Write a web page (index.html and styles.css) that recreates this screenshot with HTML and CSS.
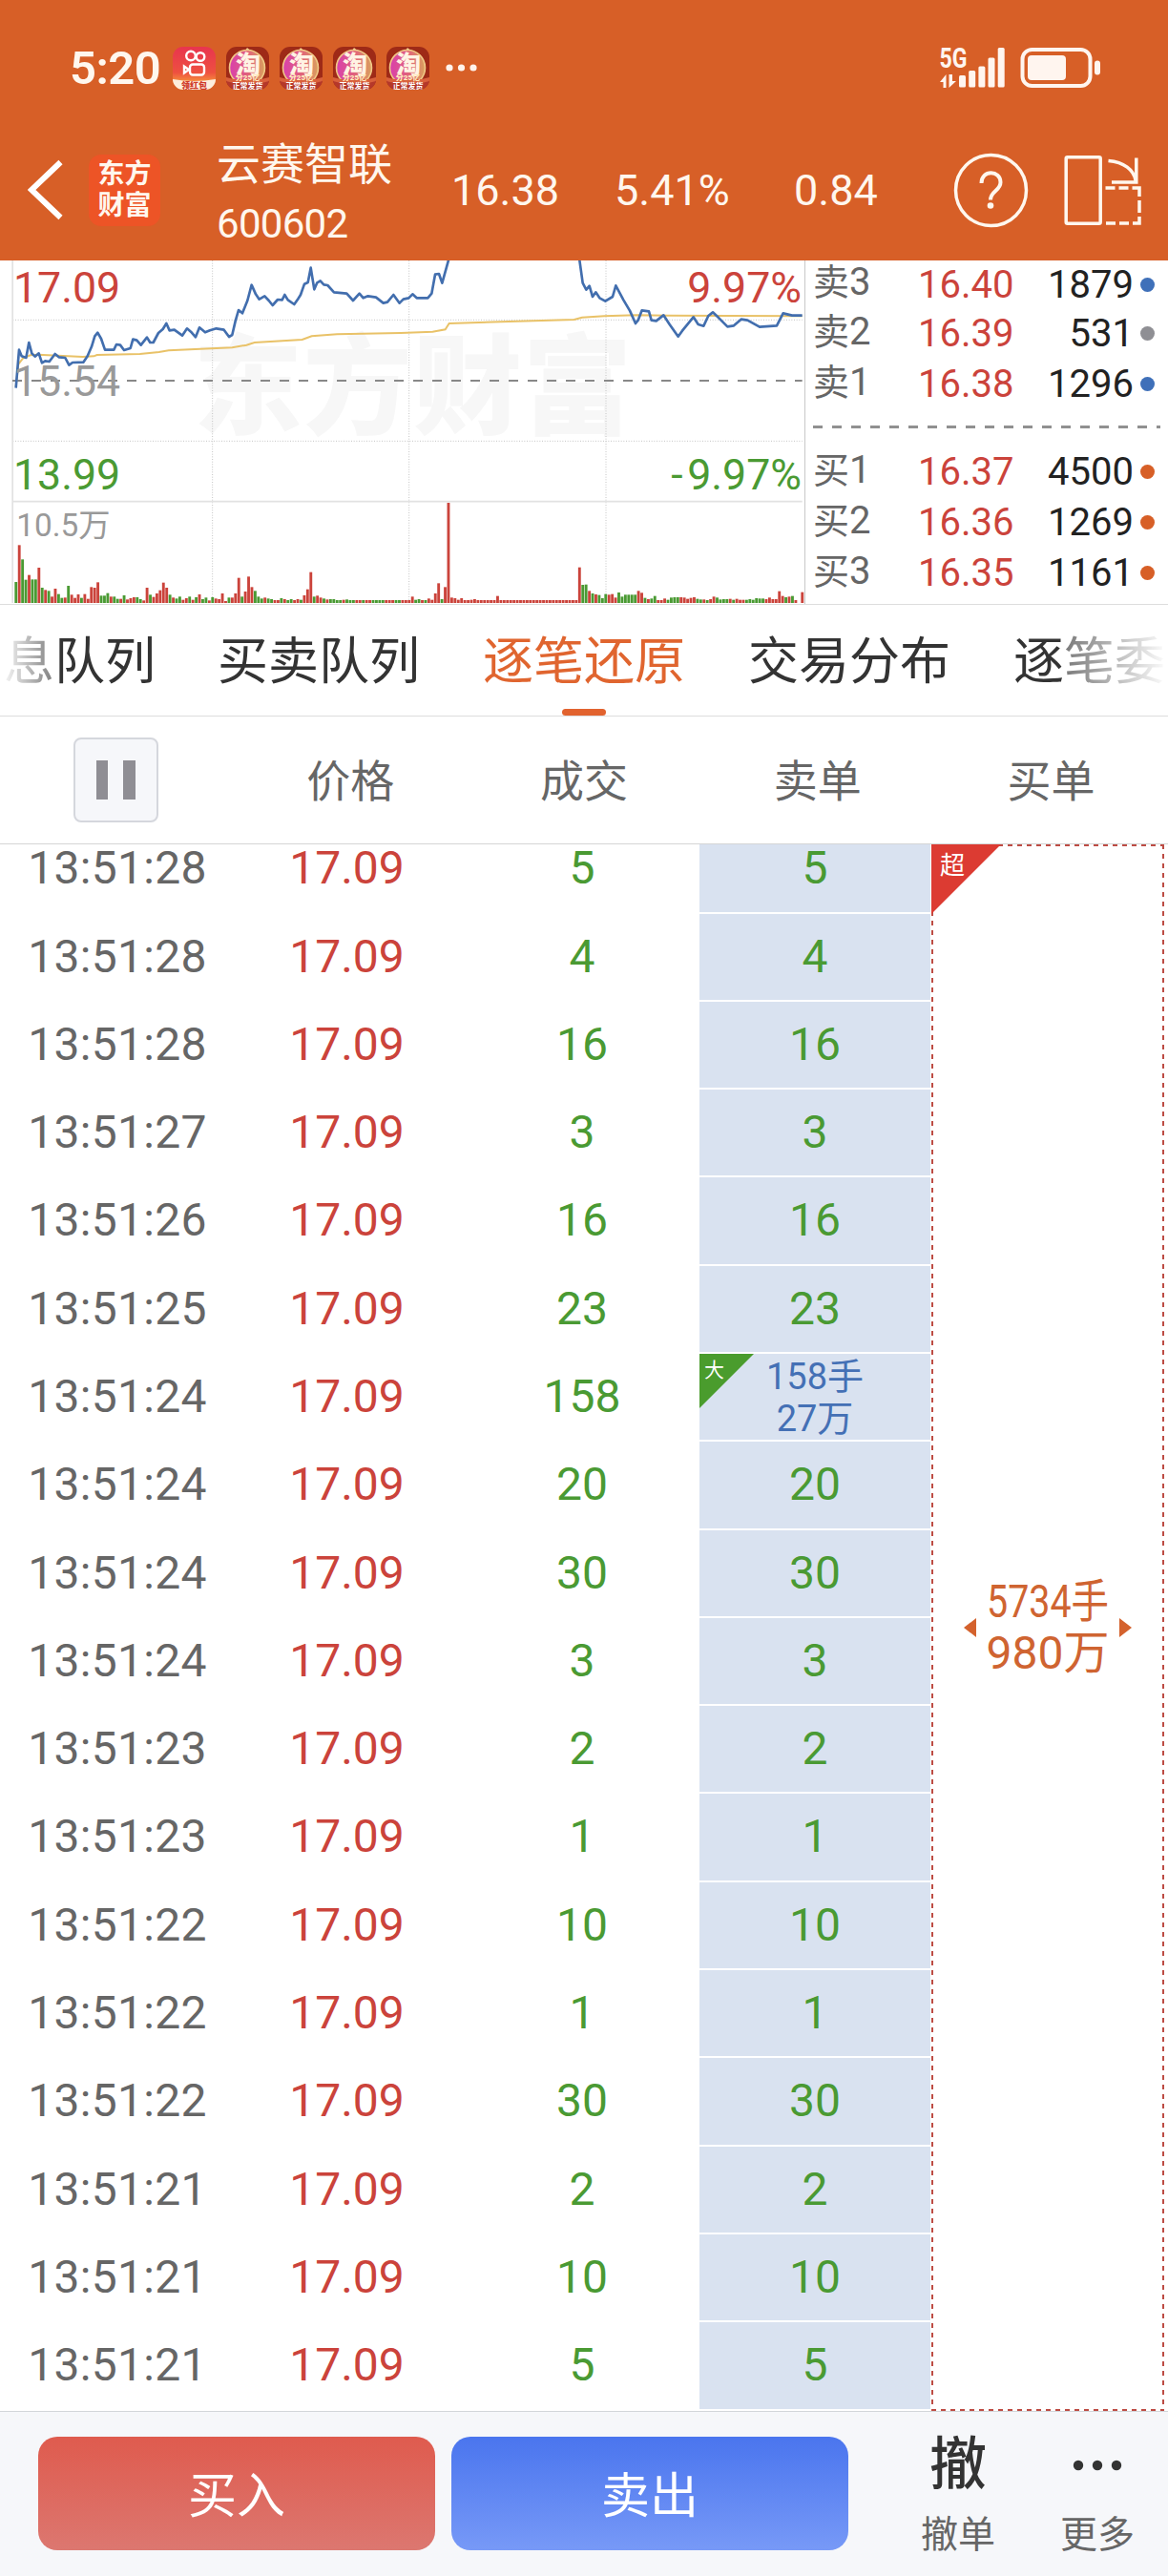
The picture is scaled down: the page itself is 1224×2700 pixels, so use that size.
FILE: index.html
```html
<!DOCTYPE html>
<html lang="zh-CN">
<head>
  <meta charset="UTF-8" />
  <title>云赛智联 600602</title>
  <meta name="viewport" content="width=device-width, initial-scale=1.0" />
  <link rel="stylesheet" href="styles.css">
</head>
<body>

  <svg width="0" height="0" class="defs">
    <defs>
      <linearGradient id="ksBg" x1="0" y1="0" x2="0" y2="1">
        <stop offset="0" stop-color="#e8344f" />
        <stop offset="0.6" stop-color="#ee5040" />
        <stop offset="0.8" stop-color="#f58a3c" />
      </linearGradient>
      <linearGradient id="tbBall" x1="0" y1="0" x2="1" y2="0">
        <stop offset="0" stop-color="#d93fae" />
        <stop offset="0.5" stop-color="#e0607c" />
        <stop offset="1" stop-color="#d9a05c" />
      </linearGradient>
      <clipPath id="appClip"><rect width="45" height="45" rx="11" /></clipPath>
      <symbol id="taobao" viewBox="0 0 45 45">
        <g clip-path="url(#appClip)">
          <rect width="45" height="45" fill="#9e2a17" />
          <path d="M18 7 L22 1 L28 6 Z" fill="#f3cf8c" />
          <circle cx="22" cy="22" r="18.5" fill="url(#tbBall)" stroke="#f0c987" stroke-width="1.6" />
          <rect y="36" width="45" height="9" fill="#b5382a" />
          <path d="M0 32 L8 34 H37 L45 32 V36 L37 38 H8 L0 36 Z" fill="#d9603c" />
          <text x="23" y="28" font-size="26" font-weight="900" text-anchor="middle" fill="#fff3e4">淘</text>
          <text x="22.500" y="35" font-size="8" font-weight="900" text-anchor="middle" fill="#ffe9bd">分25亿</text>
          <text x="22.500" y="43.500" font-size="8" font-weight="700" text-anchor="middle" fill="#fff">正常发货</text>
        </g>
      </symbol>
    </defs>
  </svg>

  <header class="top">
    <div class="status">
      <span class="clock">5:20</span>
      <div class="apps">
        <svg width="45" height="45" viewBox="0 0 45 45">
          <g clip-path="url(#appClip)">
            <rect width="45" height="45" fill="url(#ksBg)" />
            <path d="M0 34 Q22 38 45 34 V45 H0 Z" fill="#fdeedd" />
            <g fill="none" stroke="#fff" stroke-width="2.400">
              <circle cx="19" cy="9.500" r="4.800" />
              <circle cx="29" cy="10.500" r="4.300" />
              <rect x="18" y="18.500" width="15" height="11" rx="3" />
              <path d="M17 24 L12 20.500 V27.500 Z" />
            </g>
            <text x="22.500" y="43.500" font-size="9" font-weight="900" text-anchor="middle" fill="#cf3a2a">领红包</text>
          </g>
        </svg>
        <svg width="45" height="45"><use href="#taobao" /></svg>
        <svg width="45" height="45"><use href="#taobao" /></svg>
        <svg width="45" height="45"><use href="#taobao" /></svg>
        <svg width="45" height="45"><use href="#taobao" /></svg>
      </div>
      <svg class="more-apps" width="34" height="8" viewBox="0 0 34 8" fill="#fff3ec">
        <circle cx="4" cy="4" r="3.600" /><circle cx="16.500" cy="4" r="3.600" /><circle cx="29" cy="4" r="3.600" />
      </svg>
      <svg class="signal" width="172" height="64" viewBox="982 39 172 64" fill="#fff5ef">
        <text x="984.500" y="71" font-size="29" font-weight="700" textLength="29" lengthAdjust="spacingAndGlyphs">5G</text>
        <path d="M991.500 78 V92 H988.500 V86 H985 Z M994.500 78 V92 L1002 85 H998 V78 Z" />
        <rect x="1005" y="79" width="7" height="12.500" rx="1.500" />
        <rect x="1015.200" y="74" width="7" height="17.500" rx="1.500" />
        <rect x="1025.400" y="69.500" width="7" height="22" rx="1.500" />
        <rect x="1035.500" y="60.500" width="7" height="31" rx="1.500" />
        <rect x="1045.700" y="50" width="7" height="41.500" rx="1.500" />
        <rect x="1071.500" y="52" width="71" height="38" rx="10" fill="none" stroke="#fff5ef" stroke-width="4" />
        <rect x="1077" y="58" width="40" height="26" rx="4" />
        <rect x="1147" y="63.500" width="6" height="15" rx="3" />
      </svg>
    </div>

    <div class="titlebar">
      <svg class="back" width="38" height="64" viewBox="0 0 38 64">
        <path d="M34.500 3 L4 32 L34.500 61" fill="none" stroke="#fff" stroke-width="6" />
      </svg>
      <div class="logo"><span>东方</span><span>财富</span></div>
      <div class="stock">
        <div class="name">云赛智联</div>
        <div class="code">600602</div>
      </div>
      <span class="quote q-price">16.38</span>
      <span class="quote q-pct">5.41%</span>
      <span class="quote q-diff">0.84</span>
      <svg class="tools" width="200" height="80" viewBox="998 158 200 80" fill="none" stroke="#fff7ee" stroke-width="3.500">
        <circle cx="1038.500" cy="198.500" r="37" />
        <path d="M1028.500 191 C1028.500 176.500 1048.500 177 1048.500 190 C1048.500 199 1038 199 1038 208.500" stroke-width="4" />
        <circle cx="1038" cy="214.500" r="3.300" fill="#fff7ee" stroke="none" />
        <rect x="1117.200" y="163.700" width="36" height="69.500" rx="1.500" />
        <path d="M1161.500 167.500 C1178 169 1188 177 1190 188 M1190.800 164.500 V190 H1165" />
        <path d="M1158.500 196 h10 m4 0 h10 m4 0 h7.500 v9 m0 4 v13 m0 4 v7 h-7 m-4 0 h-10 m-4 0 h-10" />
      </svg>
    </div>
  </header>

  <section class="market">
    <svg class="chart" width="843" height="361" viewBox="0 24 2529 1083">
      <text class="watermark" x="608" y="543" textLength="1378">东方财富</text>
      <g class="grid">
        <path class="dots" d="M668 24 V1101 M1286 24 V1101 M1905 24 V1101 M40 211 H2522 M40 592 H2522" />
        <path class="solid" d="M39.500 24 V1101 M40 782 H2522" />
        <path class="mid" d="M39 402 H2522" />
      </g>
      <g id="bars"></g>
      <path class="avg" d="M50 420 L58 350 L72 332 L95 322 L120 320 L260 327 L295 325 L305 321 L440 318 L500 312 L530 307 L730 298 L775 290 L800 282 L950 273 L980 262 L1060 256 L1260 252 L1360 248 L1400 241 L1412 222 L1600 216 L1805 210 L1830 203 L1900 199 L2000 196 L2100 197 L2522 199" />
      <path class="price-line" d="M50 425 L60 305 L68 325 L82 330 L91 282 L100 316 L110 326 L122 316 L132 346 L142 340 L155 342 L173 318 L185 328 L205 330 L217 353 L228 345 L262 344 L275 325 L288 295 L298 262 L307 251 L318 270 L330 305 L358 305 L366 288 L378 290 L390 306 L410 300 L418 272 L430 275 L443 290 L462 266 L472 282 L482 282 L498 252 L512 240 L523 222 L533 244 L548 242 L573 260 L588 238 L600 248 L615 265 L627 235 L645 250 L660 244 L680 238 L704 242 L720 264 L730 258 L740 215 L750 180 L762 190 L778 150 L791 101 L804 130 L815 146 L832 136 L845 150 L857 165 L873 147 L887 148 L895 132 L905 148 L925 162 L935 148 L945 132 L957 98 L968 93 L977 47 L988 115 L997 94 L1007 88 L1018 100 L1030 102 L1050 124 L1090 128 L1110 150 L1130 128 L1142 142 L1157 136 L1182 140 L1205 158 L1218 155 L1237 132 L1256 158 L1268 146 L1285 142 L1297 130 L1310 142 L1345 142 L1357 128 L1368 68 L1380 66 L1390 95 L1412 16 M1821 16 L1832 95 L1843 116 L1853 104 L1863 138 L1873 124 L1885 142 L1903 152 L1926 138 L1936 103 L1960 148 L1980 182 L1998 222 L2006 212 L2018 181 L2040 184 L2048 212 L2063 214 L2086 196 L2105 225 L2132 263 L2145 245 L2180 202 L2195 225 L2212 230 L2227 198 L2241 187 L2260 205 L2287 232 L2307 229 L2330 209 L2350 212 L2388 233 L2442 229 L2462 190 L2490 197 L2522 197" />
      <g class="scale">
        <text class="up" x="42" y="155">17.09</text>
        <text class="flat" x="42" y="451">15.54</text>
        <text class="down" x="42" y="745">13.99</text>
        <text class="up" x="2520" y="155" text-anchor="end">9.97%</text>
        <text class="down" x="2520" y="745" text-anchor="end">-<tspan dx="14">9.97%</tspan></text>
        <text class="vol" x="52" y="890">10.5万</text>
      </g>
    </svg>

    <div class="book">
      <div class="book-row"><span class="lv">卖<b>3</b></span><span class="px">16.40</span><span class="qty">1879</span><i class="dot blue"></i></div>
      <div class="book-row"><span class="lv">卖<b>2</b></span><span class="px">16.39</span><span class="qty">531</span><i class="dot gray"></i></div>
      <div class="book-row"><span class="lv">卖<b>1</b></span><span class="px">16.38</span><span class="qty">1296</span><i class="dot blue"></i></div>
      <div class="book-sep"></div>
      <div class="book-row"><span class="lv">买<b>1</b></span><span class="px">16.37</span><span class="qty">4500</span><i class="dot orange"></i></div>
      <div class="book-row"><span class="lv">买<b>2</b></span><span class="px">16.36</span><span class="qty">1269</span><i class="dot orange"></i></div>
      <div class="book-row"><span class="lv">买<b>3</b></span><span class="px">16.35</span><span class="qty">1161</span><i class="dot orange"></i></div>
    </div>
  </section>

  <nav class="tabs">
    <span class="tab">息队列</span>
    <span class="tab">买卖队列</span>
    <span class="tab active">逐笔还原</span>
    <span class="tab">交易分布</span>
    <span class="tab">逐笔委</span>
  </nav>

  <div class="thead">
    <div class="th"><button class="pause"><i></i><i></i></button></div>
    <div class="th">价格</div>
    <div class="th">成交</div>
    <div class="th">卖单</div>
    <div class="th">买单</div>
  </div>

  <main class="ticks">
    <div class="rows" id="rows"></div>
    <div class="buy-order">
      <div class="corner super"><span>超</span></div>
      <i class="arrow left"></i>
      <div class="buy-total">
        <span class="hands">5734手</span>
        <span>980万</span>
      </div>
      <i class="arrow right"></i>
    </div>
  </main>

  <footer class="bottom">
    <button class="btn buy">买入</button>
    <button class="btn sell">卖出</button>
    <div class="action cancel">
      <span class="glyph">撤</span>
      <span class="label">撤单</span>
    </div>
    <div class="action">
      <span class="glyph">
        <svg width="52" height="12" viewBox="0 0 52 12" fill="#333">
          <circle cx="6" cy="6" r="5.200" /><circle cx="26" cy="6" r="5.200" /><circle cx="46" cy="6" r="5.200" />
        </svg>
      </span>
      <span class="label">更多</span>
    </div>
  </footer>

  <script>
    // volume bars: colour + height, "*n" repeats the bar
    const volumes = "g66 r182 g137 g73 r88 g74 g74 r111 g48 r41 g38 r20 r45 g28 g16 r17 g54 r26 r16 r27 g16 r28 r13 r50 r48 r65 g23 g23 g31 r20 g20 g13 r13 g24 r11 r15 r18 g18 g12 r8 " +
      "r48 g26 r19 r30 r40 r64 r48 g26 r17 g14 g20 r10 r15 g20 r10 g18 r27 g12 g17 r8 g18 r14 r12 r30 r6 g17 r17 r30 r79 g20 r36 r83 r50 g38 g20 g14 r17 g14 g12 r9 r9 g15 r12 g9 g12 r9 r12 g10 r24 r43 r97 g20 r23 r17 g14 r11 g12 g12 " +
      "g9*2 r10 g11 g9*2 r9*2 g9 r9*2 g9*4 r9*3 g9*2 r9*3 r20 g10 g12 r9 g9 r14 r10 r30 r62 g12 r50 r315 r17 r15 r10 r15 r9*2 r10 r12 r9*6 r22 r9*24 " +
      "r112 g57 g58 r38 g30 r27 g25 g15 g28 r26 r28 r17 g33 g20 g26*4 r38 r32 g16 r12 g14 g22 r9 r9 r14 g10 g17 g18 g18 r18 r17 r13 r16 r18 g13 g11 r11 g9 r12 r20 g17 g11 g12 g12 r13 g10 r13 r10 r10 g10 g12 g10 g15 g14 g14 r12 r17 r12 r12 r37 r22 g18 r20 g22 r9 r0 r34";

    const bars = [];
    volumes.split(" ").forEach(v => {
      const [bar, n] = v.split("*");
      for (let i = 0; i < (n || 1); i++) bars.push(bar);
    });
    document.getElementById("bars").innerHTML = bars.map((b, i) => {
      const h = Number(b.slice(1));
      return `<rect class="${b[0] === "r" ? "up" : "down"}" x="${(46 + i * 10.3).toFixed(1)}" y="${1101 - h}" width="8.6" height="${h}" />`;
    }).join("");

    const ticks = [
      ["13:51:28", 5], ["13:51:28", 4], ["13:51:28", 16], ["13:51:27", 3],
      ["13:51:26", 16], ["13:51:25", 23], ["13:51:24", 158, "27万"], ["13:51:24", 20],
      ["13:51:24", 30], ["13:51:24", 3], ["13:51:23", 2], ["13:51:23", 1],
      ["13:51:22", 10], ["13:51:22", 1], ["13:51:22", 30], ["13:51:21", 2],
      ["13:51:21", 10], ["13:51:21", 5]
    ];
    document.getElementById("rows").innerHTML = ticks.map(([time, qty, amount]) => {
      const sell = amount
        ? `<div class="sell-cell big"><div class="corner large"><span>大</span></div><span>${qty}手</span><span>${amount}</span></div>`
        : `<div class="sell-cell">${qty}</div>`;
      return `<div class="row"><div class="time">${time}</div><div class="price">17.09</div><div class="deal">${qty}</div>${sell}</div>`;
    }).join("");
  </script>

</body>
</html>
```
FILE: styles.css
```css
* {
  box-sizing: border-box;
}

body {
  margin: 0;
  width: 1224px;
  height: 2700px;
  display: flex;
  flex-direction: column;
  overflow: hidden;
  background: #fff;
  color: #333;
  font-family: Roboto, "Noto Sans CJK SC", sans-serif;
}

svg {
  display: block;
  flex: none;
}

button {
  font-family: inherit;
  border: none;
  padding: 0;
}

.defs {
  position: absolute;
}

/* header */
.top {
  height: 273px;
  flex: none;
  background: #d75f27;
  color: #fff7ee;
}

.status {
  height: 125px;
  display: flex;
  align-items: center;
  padding: 17px 70px 0 73px;
}

.clock {
  width: 108px;
  font-size: 49px;
  font-weight: 600;
  letter-spacing: -0.5px;
}

.apps {
  display: flex;
  gap: 11px;
}

.more-apps {
  margin-left: 17px;
}

.signal {
  margin-left: auto;
}

.titlebar {
  height: 148px;
  display: flex;
  align-items: center;
  padding-left: 29px;
}

.logo {
  width: 75px;
  height: 75px;
  margin-left: 26px;
  border-radius: 13px;
  background: #ed5426;
  display: flex;
  flex-direction: column;
  align-items: center;
  justify-content: center;
  font-size: 28px;
  font-weight: 700;
  line-height: 33px;
}

.stock {
  width: 248px;
  padding-left: 59px;
}

.name {
  font-size: 46px;
  line-height: 64px;
  margin-top: 8px;
  white-space: nowrap;
}

.code {
  font-size: 42px;
  line-height: 62px;
  letter-spacing: -0.7px;
}

.quote {
  font-size: 45px;
}

.q-price {
  width: 171px;
  margin-left: 57px;
}

.q-pct {
  width: 188px;
}

.q-diff {
  width: 166px;
}

/* chart and order book */
.market {
  height: 361px;
  flex: none;
  display: flex;
  border-bottom: 1px solid #ddd;
}

.watermark {
  font-size: 342px;
  font-weight: 900;
  fill: #f7f7f7;
}

.grid path {
  fill: none;
}

.grid .dots {
  stroke: #c4c4c4;
  stroke-width: 3;
  stroke-dasharray: 3 5;
}

.grid .solid {
  stroke: #e2e2e2;
  stroke-width: 5;
}

.grid .mid {
  stroke: #888;
  stroke-width: 6;
  stroke-dasharray: 30 30;
}

.avg {
  fill: none;
  stroke: #e9c268;
  stroke-width: 6;
}

.price-line {
  fill: none;
  stroke: #426eae;
  stroke-width: 8;
  stroke-linejoin: round;
}

.scale {
  font-size: 134px;
}

.up {
  fill: #cb433b;
}

.down {
  fill: #4a9a33;
}

.flat {
  fill: #999;
}

.vol {
  font-size: 100px;
  fill: #999;
}

.book {
  flex: 1;
  height: 360px;
  overflow: hidden;
  border-left: 1px solid #c8c8c8;
  padding-left: 8px;
}

.book-row {
  height: 53px;
  display: flex;
  align-items: center;
  font-size: 40px;
  line-height: 53px;
}

.book-row:first-child {
  height: 50px;
  line-height: 47px;
}

.lv {
  width: 110px;
  margin-top: -4px;
  font-size: 38px;
  color: #666;
}

.lv b {
  font-size: 40px;
  font-weight: 400;
}

.px {
  width: 109px;
  color: #cb433b;
}

.qty {
  width: 117px;
  text-align: right;
  color: #222;
}

.dot {
  width: 15px;
  height: 15px;
  margin-left: 7px;
  border-radius: 50%;
}

.blue {
  background: #3f70b9;
}

.gray {
  background: #8f8f94;
}

.orange {
  background: #d75f27;
}

.book-sep {
  height: 39px;
  margin-right: 8px;
  background: repeating-linear-gradient(90deg, #909090 0 10px, transparent 10px 20px) 0 17px / 100% 3px no-repeat;
}

/* tabs */
.tabs {
  position: relative;
  height: 117px;
  flex: none;
  display: flex;
  gap: 66px;
  padding-left: 4px;
  overflow: hidden;
  border-bottom: 1px solid #ddd;
}

.tabs::before,
.tabs::after {
  content: "";
  position: absolute;
  top: 0;
  bottom: 0;
  z-index: 1;
}

.tabs::before {
  left: 0;
  width: 54px;
  background: linear-gradient(90deg, #fff, rgba(255, 255, 255, 0.4));
}

.tabs::after {
  right: 0;
  width: 108px;
  background: linear-gradient(270deg, #fff, rgba(255, 255, 255, 0.35));
}

.tab {
  position: relative;
  flex: none;
  font-size: 53px;
  line-height: 121px;
}

.tab:first-child {
  margin-right: -1px;
}

.active {
  color: #e0652f;
}

.active::after {
  content: "";
  position: absolute;
  left: 83px;
  bottom: 0;
  width: 46px;
  height: 7px;
  border-radius: 4px;
  background: #e2632f;
}

/* table head */
.thead {
  height: 134px;
  flex: none;
  display: flex;
  align-items: center;
  border-bottom: 1px solid #d5d5d5;
}

.th {
  flex: 1;
  display: flex;
  justify-content: center;
  padding-bottom: 6px;
  font-size: 46px;
  color: #666;
}

.th:first-child {
  padding-bottom: 0;
}

.pause {
  width: 89px;
  height: 89px;
  margin-right: 2px;
  display: flex;
  align-items: center;
  justify-content: center;
  gap: 16px;
  border: 2px solid #d5d7dd;
  border-radius: 8px;
  background: #f6f7fa;
}

.pause i {
  width: 12.500px;
  height: 41px;
  background: #8f8e94;
}

/* tick list */
.ticks {
  height: 1642px;
  flex: none;
  display: flex;
  overflow: hidden;
}

.rows {
  width: 976px;
}

.row {
  height: 92.300px;
  display: flex;
  font-size: 48px;
  line-height: 90px;
  text-align: center;
}

.row:first-child {
  height: 72.500px;
  line-height: 50px;
}

.time {
  width: 246px;
  letter-spacing: 0.3px;
  color: #666;
}

.price {
  width: 235px;
  color: #cb433b;
}

.deal {
  width: 252px;
  padding-right: 1px;
  padding-left: 7px;
  color: #4a9a33;
}

.sell-cell {
  position: relative;
  width: 242px;
  background: #d9e2f0;
  border-bottom: 2px solid #fff;
  color: #4a9a33;
}

.big {
  display: flex;
  flex-direction: column;
  align-items: center;
  padding-top: 2px;
  font-size: 38px;
  line-height: 44px;
  color: #4470b5;
}

.corner {
  position: absolute;
  left: 0;
  top: 0;
  clip-path: polygon(0 0, 100% 0, 0 100%);
  color: #fff;
  text-align: left;
}

.large {
  width: 57px;
  height: 57px;
  padding-left: 5px;
  background: #4a9c2d;
  font-size: 21px;
  line-height: 34px;
}

.super {
  width: 73px;
  height: 73px;
  padding-left: 9px;
  background: #dc3b32;
  font-size: 26px;
  line-height: 44px;
}

.buy-order {
  position: relative;
  width: 244px;
  display: flex;
  align-items: center;
  justify-content: center;
  background:
    repeating-linear-gradient(90deg, #bd4c44 0 5px, transparent 5px 10px) 0 0 / 100% 2px no-repeat,
    repeating-linear-gradient(90deg, #bd4c44 0 5px, transparent 5px 10px) 0 100% / 100% 2px no-repeat,
    repeating-linear-gradient(180deg, #bd4c44 0 5px, transparent 5px 10px) 0 0 / 2px 100% no-repeat,
    repeating-linear-gradient(180deg, #bd4c44 0 5px, transparent 5px 10px) 100% 0 / 2px 100% no-repeat;
}

.buy-total {
  width: 150px;
  display: flex;
  flex-direction: column;
  align-items: center;
  font-size: 48px;
  line-height: 54px;
  white-space: nowrap;
  color: #cf6431;
}

.hands {
  transform: scaleX(0.82);
}

.arrow {
  border: 10px solid transparent;
}

.left {
  border-width: 10px 13px 10px 0;
  border-right-color: #d4622d;
}

.right {
  border-width: 10px 0 10px 13px;
  border-left-color: #d4622d;
}

/* trade bar */
.bottom {
  height: 173px;
  flex: none;
  display: flex;
  padding: 26px 0 0 40px;
  border-top: 1px solid #d3d6da;
  background: #f6f7fa;
}

.btn {
  width: 416px;
  height: 119px;
  margin-right: 17px;
  padding-bottom: 3px;
  border-radius: 20px;
  color: #fff;
  font-size: 51px;
}

.buy {
  background: linear-gradient(#df5b4e, #dc7770);
}

.sell {
  background: linear-gradient(#4a75ee, #7799f7);
}

.action {
  width: 146px;
  display: flex;
  flex-direction: column;
  align-items: center;
}

.cancel {
  margin-left: 25px;
}

.glyph {
  height: 60px;
  display: flex;
  align-items: center;
  font-size: 60px;
  font-weight: 500;
  line-height: 56px;
}

.label {
  font-size: 39px;
  line-height: 86px;
  color: #666;
}
```
